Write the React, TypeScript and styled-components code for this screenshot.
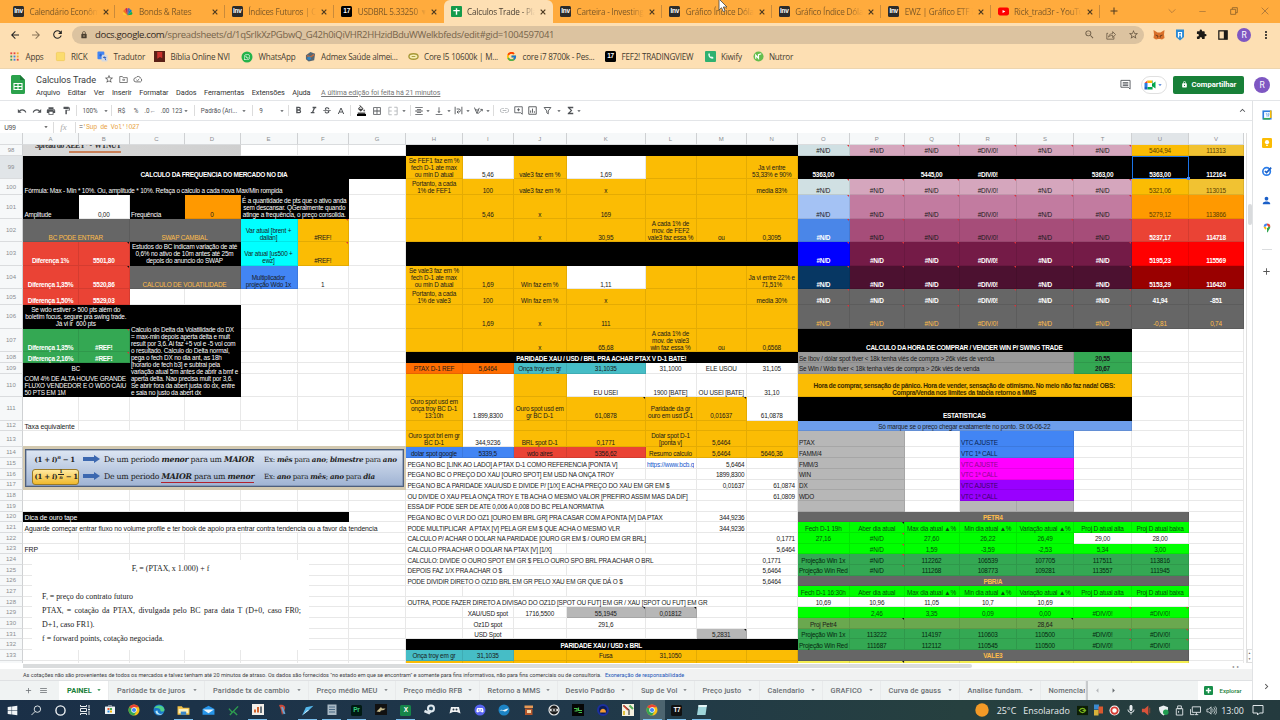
import React from 'react';
import styled, { createGlobalStyle, css } from 'styled-components';
import {
  MdUndo, MdRedo, MdPrint, MdFormatPaint, MdFormatBold, MdFormatItalic, MdStrikethroughS,
  MdFormatColorFill, MdBorderAll, MdFormatAlignCenter, MdVerticalAlignBottom,
  MdInsertLink, MdFunctions, MdArrowDropDown, MdKeyboardArrowUp, MdStarBorder, MdLock, MdArrowBack,
  MdArrowForward, MdRefresh, MdAdd, MdExtension, MdMoreVert, MdMic, MdZoomOut, MdKeyboardArrowRight,
  MdPerson, MdArrowLeft, MdArrowRight, MdMenu,
} from 'react-icons/md';
import { FcGoogle } from 'react-icons/fc';
import { FaWindows, FaWhatsapp } from 'react-icons/fa';

const Global = createGlobalStyle`
  * { box-sizing: border-box; }
  body { margin: 0; width: 1280px; height: 720px; overflow: hidden; background: #fff; }
`;

const ui = `"Open Sans", "Noto Sans", sans-serif`;
const roboto = `Roboto, "Liberation Sans", sans-serif`;
const arial = `"Liberation Sans", Arial, sans-serif`;

const Page = styled.div`
  width: 1280px; height: 720px; display: flex; flex-direction: column; overflow: hidden;
  font-family: ${roboto}; color: #444;
`;

/* ---------- browser ---------- */
const TabStrip = styled.div`
  height: 22.5px; flex: none; display: flex; padding-left: 6px; background: #ffab3d;
`;
const BrowserTab = styled.div<{ $active?: boolean }>`
  width: 109.4px; height: 23px; flex: none; display: flex; align-items: center; padding: 0 0 0 7px;
  font: 8.2px ${ui}; letter-spacing: -0.22px; color: ${p => (p.$active ? '#4c4236' : '#7f5a28')};
  ${p => p.$active && css`background: #fddfb3; border-radius: 6px 6px 0 0;`}
`;
const TabLabel = styled.span`
  width: 68px; margin-left: 5.5px; overflow: hidden; white-space: nowrap;
  mask-image: linear-gradient(90deg, #000 80%, transparent);
`;
const TabClose = styled.svg`margin-left: 5px; width: 6px; height: 6px; flex: none;`;
const TabRule = styled.i`width: 1px; height: 13px; margin-left: auto; background: #c98a3a;`;
const NewTab = styled.div`
  width: 28px; display: flex; align-items: center; justify-content: center; font-size: 12px; color: #4d3a20;
`;
const WindowButtons = styled.div`
  margin-left: auto; display: flex; align-items: center;
`;
const WinSlot = styled.span`
  width: 31px; height: 20px; display: flex; align-items: center; justify-content: center;
`;

const Badge = styled.span<{ $bg: string; $fg?: string; $s?: number }>`
  width: ${p => p.$s ?? 11}px; height: ${p => p.$s ?? 11}px; flex: none; border-radius: 1.5px;
  display: flex; align-items: center; justify-content: center;
  background: ${p => p.$bg}; color: ${p => p.$fg ?? '#fff'}; font: bold 6.5px/1 ${arial}; letter-spacing: -0.3px;
`;

const AddressRow = styled.div`
  height: 24px; flex: none; display: flex; align-items: center; background: #fddfb3; color: #222;
`;
const Slot = styled.span<{ $w: number }>`
  width: ${p => p.$w}px; flex: none; display: flex; align-items: center; justify-content: center; white-space: nowrap;
`;
const UrlBar = styled.div`
  width: 1072px; height: 18px; border-radius: 9px; background: #dcc3a0; display: flex; align-items: center;
  padding-left: 8px; font: 9.5px ${ui}; letter-spacing: -0.32px; color: #77644a; white-space: nowrap;
  b { font-weight: 400; color: #33291d; }
`;
const UrlText = styled.span`margin-left: 7px; flex: 1; line-height: 17px; height: 18px;`;
const Bookmarks = styled.div`
  height: 22.5px; flex: none; display: flex; align-items: center; background: #fddfb3; border-bottom: 1px solid #ecd5b0;
  padding: 0 0 1.5px 9px; font: 8.1px ${ui}; letter-spacing: -0.22px; color: #463d30;
`;
const Bookmark = styled.div<{ $w: number }>`
  width: ${p => p.$w}px; flex: none; display: flex; align-items: center; gap: 5.5px; white-space: nowrap;
  svg { flex: none; }
`;
const Avatar = styled.span<{ $s: number }>`
  width: ${p => p.$s}px; height: ${p => p.$s}px; border-radius: 50%; background: #7e57c2; color: #fff;
  display: flex; align-items: center; justify-content: center; font: 8.5px ${roboto};
`;

/* ---------- docs header ---------- */
const DocsHeader = styled.div`
  height: 32px; flex: none; display: flex; background: #fff; border-bottom: 1px solid #e3e5e8; padding-left: 11px;
`;
const DocsMain = styled.div`flex: 1; padding: 3.5px 0 0 11px;`;
const TitleRow = styled.div`
  height: 13px; display: flex; align-items: center; gap: 5px; color: #555; font: 9.2px ${roboto}; white-space: nowrap;
  span { width: 63px; color: #3a3c40; letter-spacing: -0.04px; }
`;
const MenuRow = styled.div`
  height: 14px; display: flex; align-items: center; gap: 7.6px; font: 7.3px ${roboto}; letter-spacing: -0.08px; color: #333;
  white-space: nowrap;
  u { margin-left: 3px; color: #777; font-size: 7.15px; letter-spacing: -0.08px; }
`;
const HeaderRight = styled.div`display: flex; align-items: center;`;
const MeetButton = styled.span`
  width: 26px; height: 18px; border: 1px solid #e0e0e0; border-radius: 9px; margin: 0 6px 0 10px;
  display: flex; align-items: center; justify-content: center; color: #3b73d1;
`;
const ShareButton = styled.button`
  width: 71px; height: 18px; border: 0; border-radius: 2px; background: #188038; color: #fff; padding: 0;
  display: flex; align-items: center; justify-content: center; gap: 4px; font: 700 7.6px ${roboto};
`;

const Body = styled.div`flex: 1; min-height: 0; display: flex;`;
const Left = styled.div`width: 1252px; flex: none; display: flex; flex-direction: column;`;
const ToolBar = styled.div`
  height: 20px; flex: none; display: flex; align-items: center; padding: 0 4px 0 14px; border-bottom: 1px solid #e3e5e8;
  color: #505357; font: 6.3px ${roboto};
`;
const Rule = styled.i<{ $w: number }>`
  width: ${p => p.$w}px; height: 11px; flex: none;
  background: linear-gradient(#dcdcdc, #dcdcdc) center / 1px 100% no-repeat;
`;
const Push = styled.span`flex: 1;`;
const FillIcon = styled.span`display: flex; border-bottom: 2px solid #000; height: 11px; align-items: flex-start; color: #444;`;
const FormulaBar = styled.div`
  height: 12px; flex: none; display: flex; align-items: center; font: 6.4px ${arial}; color: #444; padding-left: 4px;
  em { font-family: "Liberation Serif", serif; font-size: 9px; color: #aaa; }
  code { font: 6.6px "Liberation Mono", monospace; letter-spacing: -0.42px; color: #e8a33c; white-space: pre; }
  code b { font-weight: 400; color: #555; }
`;

/* ---------- sheet ---------- */
const colW = [23, 56, 50.5, 55, 56, 57, 51.5, 57, 57, 50.5, 53.5, 78.5, 51, 50.5, 50.5, 52.5, 54.5, 55, 57.5, 57, 58, 57, 55];
const rowH = [12, 10.5, 23.5, 16.3, 23.5, 23.4, 23.4, 23.4, 16.2, 23.6, 23.6, 10.6, 10.6, 23.4, 23.6, 10.6, 16.3, 10.9,
  ...Array(19).fill(10.67), 10.67];

const SheetRow = styled.div`height: 530px; flex: none; display: flex;`;
const Sheet = styled.div`
  width: 1246px; height: 530px; overflow: hidden; display: grid;
  grid-template-columns: ${colW.map(w => w + 'px').join(' ')};
  grid-template-rows: ${rowH.map(h => h + 'px').join(' ')};
  font: 6.4px/7px ${arial}; color: #1a1a1a;
`;
type Align = 'center' | 'flex-start' | 'flex-end';
type CellProps = { $bg?: string; $fg?: string; $bold?: boolean; $align: Align; $note?: string; $wide?: boolean };
const Cell = styled.div<CellProps>`
  min-width: 0; min-height: 0; display: flex; align-items: flex-end; justify-content: ${p => p.$align};
  text-align: ${p => (p.$align === 'center' ? 'center' : 'left')};
  padding: 0 ${p => (p.$align === 'center' ? 0 : 1.5)}px 0.3px; white-space: pre; position: relative;
  font-size: ${p => (p.$wide ? 6.9 : p.$bold ? 6.5 : 6.4)}px;
  letter-spacing: ${p => (p.$wide ? -0.1 : p.$bold ? -0.3 : -0.18)}px;
  background: ${p => p.$bg ?? '#fff'}; color: ${p => p.$fg ?? '#1a1a1a'}; font-weight: ${p => (p.$bold ? 700 : 400)};
  border-right: 1px solid rgba(0, 0, 0, 0.09); border-bottom: 1px solid rgba(0, 0, 0, 0.09);
  ${p => p.$note && css`
    &::after {
      content: ''; position: absolute; top: 0; right: 0; border: 1.5px solid;
      border-color: ${p.$note} ${p.$note} transparent transparent;
    }
  `}
`;
const Head = styled.div<{ $on?: boolean }>`
  background: ${p => (p.$on ? '#e1e5e8' : '#f6f8f9')}; color: #8a8d90; font: 6px/10px ${arial};
  display: flex; align-items: center; justify-content: center;
  border-right: 1px solid #cfd1d3; border-bottom: 1px solid #dadcde;
`;
const Selected = styled.div`
  position: relative; border: 1px solid #1a73e8;
  &::after { content: ''; position: absolute; right: -2px; bottom: -2px; width: 3px; height: 3px; background: #4b8df0; }
`;
const Link = styled.span`color: #1155cc; text-decoration: underline; overflow: hidden;`;

const Y = '#fbbc04', K = '#000', G6 = '#666', W = '#fff', RED = '#ea4335', GR = '#34a853', LIME = '#00ff00',
  BLUE = '#4285f4', TEAL = '#46bdc6', GREY = '#b7b7b7', GOLD = '#ffbd4a', RN = '#e0303a', CY = '#00ffff';

type Item = { at: string; t?: string; bg?: string; fg?: string; f?: string };
const items: Item[] = [];
const put = (at: string, t = '', bg?: string, fg?: string, f = '') => { items.push({ at, t, bg, fg, f }); };
const rowOf = (cols: string, row: number, vals: string[], bg?: string, fg?: string, f = '') =>
  cols.split('').forEach((c, i) => put(`${c}${row}`, vals[i] ?? '', bg, fg, f));

// A–G
put('A99:G99', 'CALCULO DA FREQUENCIA DO MERCADO NO DIA', K, W, 'b');
put('A100:F100', 'Fórmula: Max - Min * 10%. Ou, amplitude * 10%. Refaça o calculo a cada nova Max/Min rompida', K, W, 'l');
put('A101', 'Amplitude', K, W, 'l'); put('B101', '0,00');
put('C101', 'Frequência', K, W, 'l'); put('D101', '0', '#ff9900');
put('E101:F101', 'É a quantidade de pts que o ativo anda\nsem descansar. QGeralmente quando\natinge a frequência, o preço consolida.', K, W);
put('A102:B102', 'BC PODE ENTRAR', G6, GOLD); put('C102:D102', 'SWAP CAMBIAL', G6, GOLD);
put('E102', 'Var atual [brent +\ndalian]', CY); put('F102', '#REF!', Y, undefined, 'n');
put('A103', 'Diferença 1%', RED, W, 'b'); put('B103', '5501,80', RED, W, 'bk');
put('C103:D103', 'Estudos do BC indicam variação de até\n0,6% no ativo de 10m antes até 25m\ndepois do anuncio do SWAP', K, W);
put('E103', 'Var atual [us500 +\newz]', CY); put('F103', '#REF!', Y, undefined, 'n');
put('A104', 'Diferença 1,35%', RED, W, 'b'); put('B104', '5520,86', RED, W, 'bk');
put('C104:D104', 'CALCULO DE VOLATILIDADE', G6, GOLD);
put('E104', 'Multiplicador\nprojeção Wdo 1x', BLUE); put('F104', '1');
put('A105', 'Diferença 1,50%', RED, W, 'b'); put('B105', '5529,03', RED, W, 'b');
put('A106:B106', 'Se wdo estiver > 500 pts além do\nboletim focus, segure pra swing trade.\nJá vi ir  600 pts', K, W);
put('C106:D110', 'Calculo do Delta da Volatilidade do DX\n= max-min depois aperta delta e mult\nresult por 3,6. Ai faz +5 vol e -5 vol com\no resultado. Calculo do Delta normal,\npega o fech DX no dia ant, as 18h\n[horario de fech b3] e subtrai pela\nvariação atual 5m antes de abrir a bmf e\naperta delta. Nao precisa mult por 3,6.\nSe abrir fora da abert justa do dx, entre\ne saia no justo da abert dx', K, W, 'l');
put('A107', 'Diferença 1,35%', GR, W, 'b'); put('B107', '#REF!', GR, W, 'bn');
put('A108', 'Diferença 2,16%', GR, W, 'b'); put('B108', '#REF!', GR, W, 'bn');
put('A109:B109', 'BC', K, W);
put('A110:B110', 'COM 4% DE ALTA HOUVE GRANDE\nFLUXO VENDEDOR E O WDO CAIU\n50 PTS EM 1M', K, W, 'l');
put('A112', 'Taxa equivalente', undefined, undefined, 'lw');
put('A113:G113');
put('A120:F120', 'Dica de ouro tape', K, W, 'lw');
put('A121:G121', 'Aguarde começar entrar fluxo no volume profile e ter book de apoio pra entrar contra tendencia ou a favor da tendencia', undefined, undefined, 'lw');
put('A123', 'FRP', undefined, undefined, 'lw');

// H–N
put('H98:N98', '', K);
rowOf('HIJKLMN', 99, ['Se FEF1 faz em %\nfech D-1 ate max\nou min D atual', '', 'vale3 faz em %', '', '', '', 'Ja vi entre\n53,33% e 90%'], Y);
put('I99', '5,46'); put('K99', '1,69');
rowOf('HIJKLMN', 100, ['Portanto, a cada\n1% de FEF1', '100', 'vale3 faz em %', 'x', '', '', 'media 83%'], Y);
rowOf('HIJKLMN', 101, ['', '5,46', 'x', '169'], Y);
rowOf('HIJKLMN', 102, ['', '', 'x', '30,95', 'A cada 1% de\nmov. de FEF2\nvale3 faz essa %', 'ou', '0,3095'], Y);
put('H103:N103', '', K);
rowOf('HIJKLMN', 104, ['Se vale3 faz em %\nfech D-1 ate max\nou min D atual', '1,69', 'Win faz em %', '', '', '', 'Ja vi entre 22% e\n71,51%'], Y);
put('K104', '1,11');
rowOf('HIJKLMN', 105, ['Portanto, a cada\n1% de vale3', '100', 'Win faz em %', 'x', '', '', 'media 30%'], Y);
rowOf('HIJKLMN', 106, ['', '1,69', 'x', '111'], Y);
rowOf('HIJKLMN', 107, ['', '', 'x', '65,68', 'A cada 1% de\nmov. de vale3\nwin faz essa %', 'ou', '0,6568'], Y);
put('H108:N108', 'PARIDADE XAU / USD / BRL PRA ACHAR PTAX V D-1 BATE!', K, W, 'b');
rowOf('HI', 109, ['PTAX D-1 REF', '5,6464'], '#ff6d01');
rowOf('JK', 109, ['Onça troy em gr', '31,1035'], TEAL);
rowOf('LMN', 109, ['31,1000', 'ELE USOU', '31,105']);
put('H110', '', Y); put('J110', '', Y);
put('K110', 'EU USEI'); put('L110', '1900 [BATE]'); put('M110', 'OU USEI [BATE]'); put('N110', '31,10');
put('H111', 'Ouro spot usd em\nonça troy BC D-1\n13:10h', Y); put('I111', '1.899,8300');
put('J111', 'Ouro spot usd em\ngr BC D-1', Y); put('K111', '61,0878', Y, undefined, 'k');
put('L111', 'Paridade da gr\nouro em usd D-1', Y); put('M111', '0,01637', Y, undefined, 'k'); put('N111', '61,0878');
rowOf('HJKLMN', 112, [], Y);
rowOf('HJKLMN', 113, ['Ouro spot brl em gr\nBC D-1', 'BRL spot D-1', '0,1771', 'Dolar spot D-1\n[ponta v]', '5,6464', ''], Y);
put('I113', '344,9236');
rowOf('HI', 114, ['dolar spot google', '5339,5'], BLUE);
rowOf('JK', 114, ['wdo aires', '5356,62'], RED);
rowOf('LMN', 114, ['Resumo calculo', '5,6464', '5646,36'], Y);
const steps: [number, string, string][] = [
  [115, 'K', 'PEGA NO BC [LINK AO LADO] A PTAX D-1 COMO REFERENCIA [PONTA V]'],
  [116, 'K', 'PEGA NO BC O PREÇO DO XAU [OURO SPOT] EM USD NA ONÇA TROY'],
  [117, 'L', 'PEGA NO BC A PARIDADE XAU/USD E DIVIDE P/ [1/X] E ACHA PREÇO DO XAU EM GR EM $'],
  [118, 'L', 'OU DIVIDE O XAU PELA ONÇA TROY E TB ACHA O MESMO VALOR [PREFIRO ASSIM MAS DA DIF]'],
  [119, 'K', 'ESSA DIF PODE SER DE ATE 0,006 A 0,008 DO BC PELA NORMATIVA'],
  [120, 'L', 'PEGA NO BC O VLR DO OZ1 [OURO EM BRL GR] PRA CASAR COM A PONTA [V] DA PTAX'],
  [121, 'K', 'PODE MULTIPLICAR  A PTAX [V] PELA GR EM $ QUE ACHA O MESMO VLR'],
  [122, 'K', 'CALCULO P/ ACHAR O DOLAR NA PARIDADE [OURO GR EM $ / OURO EM GR BRL]'],
  [123, 'J', 'CALCULO PRA ACHAR O DOLAR NA PTAX [V] [1/X]'],
  [124, 'L', 'CALCULO: DIVIDE O OURO SPOT EM GR $ PELO OURO SPO BRL PRA ACHAR O BRL'],
  [125, 'I', 'DEPOIS FAZ 1/X PRA ACHAR O $'],
  [126, 'K', 'PODE DIVIDIR DIRETO O OZ1D BRL EM GR PELO XAU EM GR QUE DÁ O $'],
  [128, 'M', 'OUTRA, PODE FAZER DIRETO A DIVISAO DO OZ1D [SPOT OU FUT] EM GR / XAU [SPOT OU FUT] EM GR'],
];
steps.forEach(([r, end, t]) => put(`H${r}:${end}${r}`, t, undefined, undefined, 'l'));
put('L115', 'https://www.bcb.gov', undefined, undefined, 'u');
const right: [string, string][] = [
  ['M115', '5,6464'], ['M116', '1899,8300'], ['M117', '0,01637'], ['N117', '61,0874'], ['N118', '61,0809'],
  ['M120', '344,9236'], ['M121', '344,9236'], ['N122', '0,1771'], ['N123', '5,6464'],
];
right.forEach(([at, t]) => put(at, t, undefined, undefined, 'r'));
put('N124', '0,1771'); put('N125', '5,6464'); put('N126', '5,6464');
put('I129', 'XAU/USD spot'); put('J129', '1716,5500');
put('K129', '55,1945', GREY, undefined, 'k'); put('L129', '0,01812', GREY, undefined, 'k');
put('I130', 'Oz1D spot'); put('K130', '291,6'); put('I131', 'USD Spot'); put('M131', '5,2831', GREY, undefined, 'k');
put('H132:N132', 'PARIDADE XAU / USD x BRL', K, W, 'b');
rowOf('HI', 133, ['Onça troy em gr', '31,1035'], TEAL);
rowOf('JKLMN', 133, ['', 'Fusa', '31,1050', '', ''], Y);
rowOf('HIJKLMN', 134, [], Y);

// O–V
const heat: [number, string, string, string, string, string, string, string, string][] = [
  [98, '#d0e0e3', '#d5a6bd', Y, '#f1c232', '', '', '5404,94', '111313'],
  [100, '#d0e0e3', '#d5a6bd', Y, '#f1c232', '', '', '5321,06', '113015'],
  [101, '#a4c2f4', '#c27ba0', '#ff9900', '#ff9900', '', '', '5279,12', '113866'],
  [102, '#4a86e8', '#a64d79', RED, RED, W, '', '5237,17', '114718'],
  [103, '#0000ff', '#741b47', '#ff0000', '#ff0000', W, W, '5195,23', '115569'],
  [104, '#073763', '#4c1130', '#990000', '#990000', W, W, '5153,29', '116420'],
  [105, G6, G6, G6, G6, W, W, '41,94', '-851'],
  [106, G6, G6, G6, G6, GOLD, GOLD, '-0,81', '0,74'],
];
heat.forEach(([r, o, p, u, v, fo, fp, tu, tv]) => {
  const strong = fo === W;
  put(`O${r}`, '#N/D', o, fo || undefined, strong ? 'bn' : 'n');
  rowOf('PQRST', r, ['#N/D', '#N/D', '#DIV/0!', '#N/D', '#N/D'], p, fp || undefined, fp === W ? 'bn' : 'n');
  put(`U${r}`, tu, u, fo || '#5a3c00', strong ? 'b' : ''); put(`V${r}`, tv, v, fo || '#5a3c00', strong ? 'b' : '');
});
rowOf('OPQRSTUV', 99, ['5363,00', '', '5445,00', '#DIV/0!', '', '5363,00', '5363,00', '112164'], K, W, 'b');
put('O107:T107', 'CALCULO DA HORA DE COMPRAR / VENDER WIN P/ SWING TRADE', K, W, 'b');
put('O108:S108', 'Se Ibov / dólar spot tiver < 18k tenha viés de compra > 26k viés de venda', '#999', undefined, 'l');
put('O109:S109', 'Se Win / Wdo tiver < 18k tenha viés de compra > 26k viés de venda', '#999', undefined, 'l');
put('T108', '20,55', GR, undefined, 'b'); put('T109', '20,67', GR, undefined, 'b');
put('O110:T110', 'Hora de comprar, sensação de pânico. Hora de vender, sensação de otimismo. No meio não faz nada! OBS:\nCompra/Venda nos limites da tabela retorno a MMS', Y, '#3a2a00', 'b');
put('O111:T111', 'ESTATISTICAS', K, W, 'b');
put('O112:T112', 'Só marque se o preço chegar exatamente no ponto. St 06-06-22', '#6d9eeb');
['PTAX', 'FAMM/4', 'FMM/3', 'WIN', 'DX', 'WDO', ''].forEach((t, i) => put(`O${113 + i}:P${113 + i}`, t, GREY, undefined, 'l'));
[[BLUE, '#0c2450'], ['#ff00ff', '#8c0a8c'], ['#9900ff', '#3c0468']].forEach(([bg, fg], i) => {
  put(`R${113 + i * 2}:S${113 + i * 2}`, 'VTC AJUSTE', bg, fg, 'l');
  put(`R${114 + i * 2}:S${114 + i * 2}`, 'VTC 1ª CALL', bg, fg, 'l');
});
put('R119', '', GREY); put('S119', '', GREY);
put('O120:U120', 'PETR4', G6, GOLD, 'b');
const heads = ['Aber dia atual', 'Max dia atual ▲%', 'Min dia atual ▲%', 'Variação atual ▲%', 'Proj D atual alta', 'Proj D atual baixa'];
const DG = '#06500d';
const DD = '#05270f';
rowOf('OPQRSTU', 121, ['Fech D-1 19h', ...heads], LIME, DG);
put('P121', heads[0], LIME, DG, 'k');
rowOf('OPQRS', 122, ['27,16', '#N/D', '27,60', '26,22', '26,49'], LIME, DG); put('P122', '#N/D', LIME, DG, 'n');
put('T122', '29,00'); put('U122', '28,00');
rowOf('OPQRSTU', 123, ['', '#N/D', '1,59', '-3,59', '-2,53', '5,34', '3,00'], LIME, DG); put('P123', '#N/D', LIME, DG, 'n');
rowOf('OPQRSTU', 124, ['Projeção Win 1x', '#N/D', '112262', '106539', '107705', '117511', '113816'], GR, DD); put('P124', '#N/D', GR, DD, 'n');
rowOf('OPQRSTU', 125, ['Projeção Win Red', '#N/D', '111268', '108773', '109281', '113557', '111945'], GR, DD); put('P125', '#N/D', GR, DD, 'n');
put('O126:U126', 'PBR/A', G6, GOLD, 'b');
rowOf('OPQRSTU', 127, ['Fech D-1 16:30h', ...heads], LIME, DG);
rowOf('OPQRSTU', 128, ['10,69', '10,96', '11,05', '10,7', '10,69']);
rowOf('OPQRS', 129, ['', '2,46', '3,35', '0,09', '0,00'], LIME, DG); rowOf('TU', 129, ['#DIV/0!', '#DIV/0!'], LIME, DG, 'n');
rowOf('OPQRSTU', 130, ['Proj Petr4'], '#6aa84f');
put('P130', '', '#6aa84f', undefined, 'k'); put('S130', '28,64', '#6aa84f', undefined, 'k');
rowOf('OPQRS', 131, ['Projeção Win 1x', '113222', '114197', '110603', '110500'], GR, DD); rowOf('TU', 131, ['#DIV/0!', '#DIV/0!'], GR, DD, 'n');
rowOf('OPQRS', 132, ['Projeção Win Red', '111687', '112112', '110545', '110500'], GR, DD); rowOf('TU', 132, ['#DIV/0!', '#DIV/0!'], GR, DD, 'n');
put('O133:U133', 'VALE3', G6, GOLD, 'b');
rowOf('OPQRSTU', 134, [], '#f4ee52'); put('P134', '', '#f4ee52', undefined, 'k');

const area = (ref: string) => {
  const [a, b = a] = ref.split(':');
  const c = (s: string) => s.charCodeAt(0) - 63;
  const r = (s: string) => Number(s.slice(1)) - 96;
  return `${r(a)} / ${c(a)} / ${r(b) + 1} / ${c(b) + 1}`;
};

/* pictures laid over the sheet */
const Scrap = styled.div`
  position: relative; background: linear-gradient(90deg, #d9d9d9, #cfcfcf); overflow: hidden; padding-left: 12px;
  font: bold 7.6px/2px "Liberation Serif", serif; letter-spacing: -0.45px; color: #333; white-space: pre;
  i { display: block; width: 52px; height: 2px; margin: 3.5px 0 0 34px; background: #c98058; }
`;
const Tax = styled.div`
  position: relative; background: #d3c9b0; margin-top: -1px; padding: 3px 2px 3px; color: #222; font-family: "DejaVu Serif", serif;
`;
const TaxInner = styled.div`
  height: 100%; border: 1px solid #4d5f7d; background: linear-gradient(#dde6f3, #9fb3d3); box-shadow: inset 0 0 0 0.5px #6d7f9d;
  display: flex; flex-direction: column; justify-content: space-around; padding: 0 0 1px 6px;
`;
const TaxRow = styled.div`
  display: flex; align-items: center; height: 16px; white-space: nowrap; font-size: 7.8px; letter-spacing: -0.25px;
  b { font-style: italic; }
`;
const Formula = styled.span<{ $gold?: boolean }>`
  width: 47px; height: 16px; display: flex; align-items: center; padding-left: 1.5px; margin-right: 4px;
  font-weight: 700; font-size: 7px; letter-spacing: -0.3px; border: 1px solid transparent; border-radius: 3px; white-space: pre;
  ${p => p.$gold && css`border-color: #9a7a26; background: linear-gradient(#ffe9a0, #f0b92c);`}
  sup { font-size: 5px; line-height: 1; font-style: italic; margin-bottom: 4px; }
  span { margin-left: 2px; }
`;
const Power = styled.em`
  display: flex; flex-direction: column; align-items: center; font-size: 4.8px; line-height: 5px; letter-spacing: 0; margin: 0 0 4px 1px;
  b:first-child { border-bottom: 0.5px solid #222; font-style: normal; padding: 0 1px; }
`;
const TaxText = styled.span<{ $w: number }>`width: ${p => p.$w}px; flex: none;`;
const TaxHint = styled.span`font-size: 7.15px;`;
const Marked = styled.span`border-bottom: 1px solid #b3202c; padding-bottom: 1px;`;
const Frp = styled.div`
  position: relative; width: 277px; height: 90px; margin: 6px 0 0 9px; background: #fff; padding: 0 8px 0 10px;
  font: 7.95px/13.8px "Liberation Serif", serif; color: #222;
  sub { font-size: 4.5px; line-height: 0; vertical-align: -1px; }
`;
const FrpTitle = styled.div`text-align: center; padding-right: 2px; margin-bottom: 13px; line-height: 17px;`;
const FrpLine = styled.div<{ $full?: boolean }>`white-space: nowrap; ${p => p.$full && css`text-align-last: justify;`}`;

const VScroll = styled.div`
  width: 6px; border-left: 1px solid #e0e0e0; display: flex; flex-direction: column; align-items: center; padding-top: 71px;
  i { width: 4px; height: 21px; border-radius: 2px; background: #d9dbdd; }
`;
const Steppers = styled.div`
  margin-top: auto; height: 14px; width: 6px; border: 1px solid #ddd; font: 3px/6px ${arial}; color: #666; text-align: center;
`;
const HScroll = styled.div`
  height: 6px; flex: none; padding: 1px 0 0 23px; background: #fff; display: flex; justify-content: space-between;
  i { width: 949px; height: 4px; background: #dadcdd; border-radius: 0 2px 2px 0; }
  span { width: 20px; font: 4px/5px ${arial}; color: #777; }
`;
const Legal = styled.div`
  height: 11px; flex: none; background: #f1f2f2; padding-left: 23px; font: 5.5px/12px ${roboto}; color: #3c4043; white-space: nowrap;
  a { color: #1a55b8; margin-left: 2px; }
`;
const SheetTabs = styled.div`
  flex: 1; display: flex; align-items: stretch; background: #f0f3f3; border-top: 1px solid #dfe1e3; color: #686d71;
  font: 500 7.4px ${roboto}; overflow: hidden;
`;
const SheetTab = styled.div<{ $w: number; $on?: boolean }>`
  width: ${p => p.$w}px; flex: none; display: flex; align-items: center; justify-content: space-between; padding: 0 5px 1px 8px;
  white-space: nowrap; border-right: 1px solid #e8eaeb; letter-spacing: 0.13px; overflow: hidden;
  ${p => p.$on && css`background: #fff; color: #188038; font-weight: 700; letter-spacing: 0;`}
`;
const TabNav = styled.div`
  width: 112px; flex: none; display: flex; align-items: center; padding-left: 4px; gap: 5px; background: #f0f3f3;
  border-left: 2px solid #c7cacc;
`;
const Explore = styled.div`
  flex: 1; display: flex; align-items: center; gap: 7px; padding-left: 6px; background: #fff; color: #188038; font: 500 6px ${roboto};
`;
const SidePanel = styled.div`
  flex: 1; border-left: 1px solid #e0e2e4; display: flex; flex-direction: column; align-items: center; padding-top: 9px; background: #fff;
`;
const SideSlot = styled.span<{ $h: number }>`
  height: ${p => p.$h}px; flex: none; display: flex; align-items: flex-start; justify-content: center;
`;

/* ---------- task bar ---------- */
const TaskBar = styled.div`
  height: 20px; flex: none; display: flex; align-items: center; background: linear-gradient(90deg, #1a2f47, #20384a 45%, #26403f 75%, #243a3e);
  color: #e8edf0; font: 8.9px ${ui};
`;
const Task = styled.span<{ $open?: boolean; $on?: boolean }>`
  width: 24.67px; height: 20px; flex: none; display: flex; align-items: center; justify-content: center;
  ${p => p.$on && css`background-color: #4d6570;`}
  ${p => p.$open && css`
    background-image: linear-gradient(#7cc0ee, #7cc0ee); background-repeat: no-repeat;
    background-size: 19px 1.5px; background-position: center bottom;
  `}
`;

const Caret = styled(MdArrowDropDown).attrs({ size: 8 })`flex: none;`;
const Svg = ({ s = 11, children }: { s?: number; children: React.ReactNode }) => (
  <svg width={s} height={s} viewBox="0 0 24 24" fill="none">{children}</svg>
);
const Chrome = () => (
  <Svg s={12}>
    <circle cx="12" cy="12" r="11" fill="#fbc116" />
    <path d="M12 12 2.5 6.5A11 11 0 0 1 21.5 6.5H12Z" fill="#ea4335" />
    <path d="M12 12 2.5 6.5A11 11 0 0 0 12 23l5-8Z" fill="#34a853" />
    <circle cx="12" cy="12" r="5.4" fill="#fff" /><circle cx="12" cy="12" r="4.2" fill="#4285f4" />
  </Svg>
);
const Peacock = () => (
  <Svg>
    <path d="M12 20 3 19q-3-4 1-6Z" fill="#fccb2f" /><path d="M12 20 3 12q0-5 4-4Z" fill="#f37021" />
    <path d="M12 20 7 7q3-5 5-1Z" fill="#cc2350" /><path d="m12 20 0-14q4-4 5 1Z" fill="#6460aa" />
    <path d="m12 20 5-12q5-1 4 4Z" fill="#0089cf" /><path d="m12 20 8-7q5 2 1 6Z" fill="#0db14b" />
  </Svg>
);
const SheetsSmall = () => (
  <Svg><rect width="24" height="24" rx="2" fill="#149a4c" /><path d="M12 5v14M5 10h14" stroke="#fff" strokeWidth="3" /></Svg>
);
const YouTube = () => (<Svg><rect x="0" y="3.5" width="24" height="17" rx="4" fill="#f00" /><path d="m10 8.5 6 3.5-6 3.5Z" fill="#fff" /></Svg>);
const Inv = () => <Badge $bg="#2b2b2b">Inv</Badge>;
const TV = () => <Badge $bg="#000">17</Badge>;
const BlueArrow = () => (
  <TaxText $w={21}><svg width="17" height="8" viewBox="0 0 17 8"><path d="M0 2h11V0l6 4-6 4V6H0Z" fill="#3c68b0" /></svg></TaxText>
);

const browserTabs: [React.ReactNode, string][] = [
  [<Inv />, 'Calendário Econôm'], [<Peacock />, 'Bonds & Rates'], [<Inv />, 'Índices Futuros | C'], [<TV />, 'USDBRL 5.33250 ▼'],
  [<SheetsSmall />, 'Calculos Trade - Pla'], [<Inv />, 'Carteira - Investing'], [<Inv />, 'Gráfico Índice Dóla'], [<Inv />, 'Gráfico Índice Dóla'],
  [<Inv />, 'EWZ | Gráfico ETF i'], [<YouTube />, 'Rick_trad3r - YouTu'],
];

const appGrid = ['#e5443c', '#e5443c', '#f0a72c', '#3f9b57', '#3f7de0', '#f0a72c', '#3f9b57', '#3f7de0', '#e5443c'];
const bookmarks: [number, React.ReactNode, string][] = [
  [45.5, <Svg>{appGrid.map((c, i) => <rect key={i} x={3 + (i % 3) * 7} y={3 + Math.floor(i / 3) * 7} width="4" height="4" fill={c} />)}</Svg>, 'Apps'],
  [42.5, <Svg><rect x="3" y="3" width="18" height="18" rx="2" fill="#fbdc6e" stroke="#eabf3f" /></Svg>, 'RICK'],
  [57, <Svg><rect x="1" y="1" width="15" height="17" rx="2" fill="#4285f4" /><rect x="10" y="8" width="13" height="15" rx="2" fill="#d5d9e0" /><path d="M5 9h6M8 6v6M13 14h7M16 12l3 8" stroke="#2c5fc0" strokeWidth="2" /></Svg>, 'Tradutor'],
  [87, <Svg><rect width="24" height="24" fill="#5b2016" /><path d="M7 2h11v14l-5-3-6 4Z" fill="#c9302c" /></Svg>, 'Bíblia Online NVI'],
  [63.5, <Svg s={12}><circle cx="12" cy="12" r="11" fill="#25b34b" /><g transform="translate(5 5)"><FaWhatsapp size={14} color="#fff" /></g></Svg>, 'WhatsApp'],
  [103, <Svg><path d="m2 9 10-7 10 4-2 14-12 3-6-5Z" fill="#546674" /><path d="m4 10 8 3 8-5" stroke="#c56a3a" strokeWidth="3" /><circle cx="9" cy="16" r="4" fill="#2f86c6" /></Svg>, 'Admex Saúde almei...'],
  [98.5, <Svg><ellipse cx="12" cy="12" rx="10" ry="6" fill="#f7eeb5" stroke="#a79837" strokeWidth="3" /><path d="M8 12h8" stroke="#a79837" strokeWidth="2" /></Svg>, 'Core I5 10600k | M...'],
  [99, <FcGoogle size={11} />, 'core i7 8700k - Pes...'],
  [99.5, <TV />, 'FEF2! TRADINGVIEW'],
  [48, <Svg><rect width="24" height="24" rx="2" fill="#2fb170" /><path d="M7 6c0 7 4 11 11 11v-4l-4-1-1 1-3-3 1-1-1-4Z" fill="#e9fff4" /></Svg>, 'Kiwify'],
  [50, <Svg><circle cx="12" cy="12" r="11" fill="#64bd4d" /><path d="M6 17V9l6 7V8l6-2" stroke="#fff" strokeWidth="2.6" /></Svg>, 'Nutror'],
];

const sheetTabs: [string, number][] = [
  ['Paridade tx de juros', 96], ['Paridade tx de cambio', 103.5], ['Preço médio MEU', 87], ['Preço médio RFB', 84], ['Retorno a MMS', 78],
  ['Desvio Padrão', 75.5], ['Sup de Vol', 61.5], ['Preço justo', 65], ['Calendario', 63], ['GRAFICO', 58], ['Curva de gauss', 79], ['Analise fundam.', 81], ['Nomenclar', 45],
];

const tasks: [React.ReactNode, string?][] = [
  [<Svg s={12}><rect x="2" y="5" width="20" height="15" rx="1" fill="#f0f4f6" /><rect x="7" y="8" width="4" height="4" fill="#e4572e" /><rect x="12" y="8" width="4" height="4" fill="#4caf50" /><rect x="7" y="13" width="4" height="4" fill="#2b8de0" /><rect x="12" y="13" width="4" height="4" fill="#f5b400" /><path d="M9 5V3h6v2" stroke="#f0f4f6" /></Svg>],
  [<Chrome />],
  [<Svg s={12}><circle cx="12" cy="12" r="11" fill="#1a78c9" /><path d="M2 9c4-9 19-8 21 2 0 5-6 5-8 3 1-5-6-7-13-5Z" fill="#4fd08a" /><path d="M9 13c0 6 5 8 11 6-5 5-15 3-15-5Z" fill="#b7e6f7" /></Svg>],
  [<Svg s={13}><path d="M1 4h8l2 3h12v13H1Z" fill="#f2c045" /><rect x="3" y="9" width="18" height="8" fill="#fdf0bb" /><rect x="7" y="14" width="10" height="6" fill="#3a86c9" /></Svg>, 'open'],
  [<Svg s={13}><path d="M1 9 12 3l11 6v11H1Z" fill="#2795e9" /><path d="m2 10 10 7 10-7Z" fill="#e9f6ff" /></Svg>],
  [<Svg s={11}><path d="M2 8 10 17M22 3 4 22M12 14l8 8" stroke="#2e9e4f" strokeWidth="3" /></Svg>],
  [<Svg s={12}><rect width="24" height="22" fill="#f4efe9" /><path d="M6 17V11M12 17V6" stroke="#d2622b" strokeWidth="4" /><path d="M18 18V5" stroke="#3d4c5a" strokeWidth="3" /></Svg>, 'open'],
  [<Svg s={12}><path d="M6 2c8-2 14 2 12 8l-6 12-2-10Z" fill="#c94b3c" /><path d="m12 6 5 14" stroke="#6aa5d0" strokeWidth="4" /></Svg>],
  [<Svg s={13}><path d="M2 21 9 6l14-3-8 8Z" fill="#55b8ec" /><path d="m2 21 9-9 4-1Z" fill="#e6f6ff" /></Svg>, 'open'],
  [<Svg s={12}><rect x="3" y="1" width="18" height="21" fill="#a9b9c5" /><path d="M6 6h12M6 11h12M6 16h12" stroke="#4b6a85" strokeWidth="2.4" /></Svg>, 'open'],
  [<Badge $bg="#001a12" $fg="#35d07e">Pr</Badge>, 'open'],
  [<Svg s={12}><rect width="24" height="22" fill="#111" /><path d="m3 15 9-9 2 3 7 0-3 3-6 1-2 3Z" fill="#c9bd8e" /></Svg>],
  [<Badge $bg="#16864a">X</Badge>, 'open'],
  [<Svg s={12}><circle cx="14" cy="9" r="8" fill="#dfe8ee" /><circle cx="14" cy="9" r="4" fill="#23455c" /><path d="m1 14 9 4 4-5" stroke="#dfe8ee" strokeWidth="5" /></Svg>],
  [<Svg s={12}><path d="M1 19 4 6h16l3 13-7-3H8Z" fill="#f0f2f3" /><circle cx="9" cy="11" r="2" fill="#2b3b47" /><circle cx="15" cy="11" r="2" fill="#2b3b47" /></Svg>],
  [<Svg s={12}><circle cx="12" cy="12" r="11" fill="#5865f2" /><path d="M5 16c0-10 2-8 7-8s7-2 7 8l-3 1-2-2h-4l-2 2Z" fill="#fff" /><circle cx="9.5" cy="12" r="1.5" fill="#5865f2" /><circle cx="14.5" cy="12" r="1.5" fill="#5865f2" /></Svg>],
  [<Svg s={12}><circle cx="12" cy="12" r="11" fill="#1c84c6" /><path d="M3 14c5-2 8 0 10 1 4 0 6-4 8-6-5 0-8 3-10 3s-5-2-8 2Z" fill="#e6f4fb" /></Svg>],
  [<Svg s={12}><rect x="4" y="9" width="15" height="13" fill="#b4562c" /><path d="M3 3h17v5H3Z" fill="#e79a56" /><path d="M8 12h8v6H8Z" fill="#f6d7a8" /></Svg>],
  [<Svg s={12}><circle cx="12" cy="12" r="10" fill="#1b1b1b" stroke="#e8e8e8" strokeWidth="2.4" /><path d="M4 12h16" stroke="#e8e8e8" strokeWidth="5" /><circle cx="9" cy="12" r="2" fill="#222" /><circle cx="15" cy="12" r="2" fill="#222" /></Svg>],
  [<Svg s={12}><rect width="24" height="24" fill="#050505" /><path d="M4 9h6v5H5M13 7v6h7M13 17h7" stroke="#46c14b" strokeWidth="2.4" /></Svg>],
  [<Svg s={12}><circle cx="12" cy="12" r="10" stroke="#1b2f9e" strokeWidth="4" fill="#0c1c55" /><path d="M6 17c0-10 12-10 12 0Z" fill="#f29a34" /></Svg>],
  [<Svg s={12}><rect width="24" height="24" fill="#f6f1df" /><path d="m3 3 11 9v10" stroke="#3c3c3c" strokeWidth="2.4" /><path d="m3 3 9 9" stroke="#d0402d" strokeWidth="3" /><path d="m15 3 7 7" stroke="#58b35c" strokeWidth="4" /><path d="M4 14v8" stroke="#e0c13e" strokeWidth="4" /></Svg>],
  [<Chrome />, 'on'],
  [<Badge $bg="#111">T7</Badge>, 'open'],
  [<Svg s={12}><path d="M5 2h17l-3 20H2Z" fill="#9fd5da" /><path d="M5 2h17l-1 4H5Z" fill="#e6f5f6" /></Svg>, 'open'],
];

const Tray = styled.div`margin-left: auto; display: flex; align-items: center; height: 20px;`;
const Pointer = styled.svg`position: absolute; left: 718px; top: -1px;`;

export default function App() {
  return (
    <Page>
      <Global />
      <TabStrip>
        {browserTabs.map(([icon, label], i) => (
          <BrowserTab key={i} $active={i === 4}>
            {icon}<TabLabel>{label}</TabLabel>
            <TabClose viewBox="0 0 6 6"><path d="M.7.7 5.3 5.3M5.3.7.7 5.3" stroke="#4d3a20" strokeWidth="1.2" /></TabClose>
            {i !== 3 && i !== 4 && <TabRule />}
          </BrowserTab>
        ))}
        <NewTab><MdAdd /></NewTab>
        <WindowButtons>
          <WinSlot><Svg s={8}><path d="m2 7 10 10L22 7" stroke="#a87438" strokeWidth="2.4" /></Svg></WinSlot>
          <WinSlot><Svg s={7}><path d="M1 12h22" stroke="#a87438" strokeWidth="2.6" /></Svg></WinSlot>
          <WinSlot><Svg s={8}><path d="M2 7h15v15H2ZM7 7V2h15v15h-5" stroke="#8a5f2a" strokeWidth="2.4" /></Svg></WinSlot>
          <WinSlot><Svg s={8}><path d="m2 2 20 20M22 2 2 22" stroke="#a0703a" strokeWidth="2.4" /></Svg></WinSlot>
        </WindowButtons>
      </TabStrip>
      <AddressRow>
        <Slot $w={30}><MdArrowBack size={12} /></Slot><Slot $w={12}><MdArrowForward size={12} color="#8a7558" /></Slot>
        <Slot $w={30}><MdRefresh size={13} /></Slot>
        <UrlBar>
          <MdLock size={8} color="#4a3f30" />
          <UrlText><b>docs.google.com</b>/spreadsheets/d/1qSrIkXzPGbwQ_G42h0iQiVHR2HHzidBduWWelkbfeds/edit#gid=1004597041</UrlText>
          <Slot $w={21}><MdZoomOut size={11} color="#6b5a44" /></Slot>
          <Slot $w={22}><Svg s={10}><path d="M5 8H2v14h17v-6M6 17c1-7 6-8 10-8V4l7 7-7 7v-5c-4 0-7 1-10 4Z" stroke="#6b5a44" strokeWidth="2" /></Svg></Slot>
          <Slot $w={22}><MdStarBorder size={11} color="#6b5a44" /></Slot>
        </UrlBar>
        <Slot $w={29}><Svg s={12}><path d="m1 2 8 5h6l8-5-1 9 1 7-5 3-4-1h-4l-4 1-5-3 1-7Z" fill="#d9702b" /><path d="m5 12 5 2-1 3M19 12l-5 2 1 3" stroke="#5b3218" strokeWidth="1.6" /></Svg></Slot>
        <Slot $w={14}><Svg s={12}><path d="M4 1h16v15l-8 7-8-7Z" fill="#2b8bd6" /><path d="M9 17V7h6v10M9 12h6" stroke="#fff" strokeWidth="2.4" /></Svg></Slot>
        <Slot $w={28}><MdExtension size={11} color="#1c1a17" /></Slot>
        <Slot $w={15}><Svg s={10}><rect x="2" y="2" width="20" height="20" stroke="#1c1a17" strokeWidth="3" /><rect x="14" y="2" width="8" height="20" fill="#1c1a17" /></Svg></Slot>
        <Slot $w={28}><Avatar $s={14}>R</Avatar></Slot>
        <Slot $w={15}><MdMoreVert size={12} /></Slot>
      </AddressRow>
      <Bookmarks>
        {bookmarks.map(([w, icon, label]) => <Bookmark key={label} $w={w}>{icon}{label}</Bookmark>)}
      </Bookmarks>
      <DocsHeader>
        <Slot $w={14}>
          <svg width="14" height="19" viewBox="0 0 14 19">
            <path d="M1.5 0H9l5 5v12.5a1.5 1.5 0 0 1-1.5 1.5h-11A1.5 1.5 0 0 1 0 17.5v-16A1.5 1.5 0 0 1 1.5 0Z" fill="#2ba24c" />
            <path d="M9 0v5h5Z" fill="#1b7a37" /><path d="M3 8.5h8v6H3ZM3 11.5h8M7 8.5v6" stroke="#fff" fill="none" strokeWidth="1.1" />
          </svg>
        </Slot>
        <DocsMain>
          <TitleRow>
            <span>Calculos Trade</span><MdStarBorder size={10} />
            <Svg s={9}><path d="M2 4h7l2 3h11v13H2ZM8 13h7M12 10l3 3-3 3" stroke="#666" strokeWidth="2.2" /></Svg>
            <Svg s={10}><path d="M7 19a5 5 0 0 1 0-10 6 6 0 0 1 11 1 5 5 0 0 1 0 9ZM8 14l3 2 4-4" stroke="#666" strokeWidth="2.2" /></Svg>
          </TitleRow>
          <MenuRow>
            {['Arquivo', 'Editar', 'Ver', 'Inserir', 'Formatar', 'Dados', 'Ferramentas', 'Extensões', 'Ajuda'].map(m => <span key={m}>{m}</span>)}
            <u>A última edição foi feita há 21 minutos</u>
          </MenuRow>
        </DocsMain>
        <HeaderRight>
          <Svg s={11}><path d="M2 3h20v19l-4-4H2ZM6 8h12M6 11h12M6 14h12" stroke="#555a5f" strokeWidth="2" /></Svg>
          <MeetButton>
            <Svg s={12}><path d="M1 8 7 3v5Z" fill="#ea4335" /><path d="M7 3h9v5H7Z" fill="#fbbc04" /><path d="M1 8h6v8H1Z" fill="#2a7de1" /><path d="M1 16h6v5H1Z" fill="#1a5fc8" /><path d="M7 16h9v5H7ZM16 10l7-5v14l-7-5Z" fill="#00a94f" /><path d="M16 3h1v18h-1Z" fill="#00832d" /></Svg>
            <Caret />
          </MeetButton>
          <ShareButton><MdLock size={7} />Compartilhar</ShareButton>
          <Slot $w={36}><Avatar $s={16}>R</Avatar></Slot>
        </HeaderRight>
      </DocsHeader>
      <Body>
        <Left>
          <ToolBar>
            <Slot $w={16}><MdUndo size={10} /></Slot><Slot $w={14}><MdRedo size={10} /></Slot><Slot $w={14}><MdPrint size={10} /></Slot>
            <Slot $w={16}><MdFormatPaint size={9} /></Slot><Rule $w={4} /><Slot $w={24}>100%</Slot><Slot $w={8}><Caret /></Slot><Rule $w={3} />
            <Slot $w={17}>R$</Slot><Slot $w={12}>%</Slot><Slot $w={16}>.0←</Slot><Slot $w={14}>.00</Slot><Slot $w={18}>123<Caret /></Slot><Rule $w={8} />
            <Slot $w={42}>Padrão (Ari...</Slot><Slot $w={8}><Caret /></Slot><Rule $w={8} /><Slot $w={10}>9</Slot><Slot $w={12} /><Slot $w={8}><Caret /></Slot><Rule $w={4} />
            <Slot $w={16}><MdFormatBold size={11} /></Slot><Slot $w={14}><MdFormatItalic size={11} /></Slot><Slot $w={14}><MdStrikethroughS size={10} /></Slot>
            <Slot $w={14}><Svg s={8}><path d="M4 21 12 3l8 18M7 15h10" stroke="#505357" strokeWidth="3" /></Svg></Slot><Rule $w={5} />
            <Slot $w={16}><FillIcon><MdFormatColorFill size={9} /></FillIcon></Slot><Slot $w={16}><MdBorderAll size={10} /></Slot>
            <Slot $w={15}><Svg s={10}><path d="M9 3H2v18h7M15 3h7v18h-7M2 12h7M15 12h7" stroke="#b8bbbe" strokeWidth="2.4" /></Svg></Slot><Slot $w={8}><Caret /></Slot><Rule $w={5} />
            <Slot $w={11}><MdFormatAlignCenter size={10} /></Slot><Slot $w={8}><Caret /></Slot><Slot $w={14}><MdVerticalAlignBottom size={10} /></Slot><Slot $w={5}><Caret /></Slot>
            <Slot $w={15}><Svg s={9}><path d="M3 2v20M21 2v20M7 8h6a4 4 0 0 1 0 8h-3M12 12l-4 4 4 4" stroke="#505357" strokeWidth="2.4" /></Svg></Slot><Slot $w={4}><Caret /></Slot>
            <Slot $w={16}><Svg s={9}><path d="M1 4 8 20 14 5M3 10l9 1M10 21 22 9M22 9v5M22 9h-5" stroke="#505357" strokeWidth="2.4" /></Svg></Slot><Slot $w={4}><Caret /></Slot><Rule $w={7} />
            <Slot $w={14}><MdInsertLink size={11} color="#b5b8bb" /></Slot>
            <Slot $w={14.5}><Svg s={9}><path d="M2 2h20v20l-4-4H2ZM12 6v8M8 10h8" stroke="#505357" strokeWidth="2.2" /></Svg></Slot>
            <Slot $w={14.5}><Svg s={9}><path d="M2 2h20v20H2ZM7 18v-6M12 18V7M17 18v-4" stroke="#505357" strokeWidth="2.4" /></Svg></Slot>
            <Slot $w={15}><Svg s={9}><path d="M3 4h18l-7 9v8l-4-3v-5Z" stroke="#505357" strokeWidth="2.4" /></Svg></Slot><Slot $w={8}><Caret /></Slot>
            <Slot $w={14}><MdFunctions size={11} /></Slot><Slot $w={4}><Caret /></Slot>
            <Push /><MdKeyboardArrowUp size={11} />
          </ToolBar>
          <FormulaBar>
            <Slot $w={12}>U99</Slot><Slot $w={26} /><Slot $w={8}><Caret /></Slot><Rule $w={6} /><Slot $w={15}><em>fx</em></Slot><Rule $w={8} />
            <code><b>=</b>'Sup de Vol'!O27</code>
          </FormulaBar>
          <SheetRow>
            <Sheet>
              {' ABCDEFGHIJKLMNOPQRSTUV'.split('').map((l, i) => <Head key={l} $on={l === 'U'} style={{ gridArea: `1 / ${i + 1}` }}>{l.trim()}</Head>)}
              {rowH.slice(1).map((_, i) => <Head key={i} $on={i === 1} style={{ gridArea: `${i + 2} / 1` }}>{i < 36 ? 98 + i : ''}</Head>)}
              {rowH.slice(1).flatMap((_, r) => colW.slice(1).map((__, c) => (
                <Cell key={`${r}-${c}`} $align="center" style={{ gridArea: `${r + 2} / ${c + 2}` }} />
              )))}
              {items.map(({ at, t, bg, fg, f = '' }, i) => (
                <Cell key={i} $bg={bg} $fg={fg} $bold={f.includes('b')} $wide={f.includes('w')}
                  $align={f.includes('l') || f.includes('u') ? 'flex-start' : f.includes('r') ? 'flex-end' : 'center'}
                  $note={f.includes('n') ? RN : f.includes('k') ? '#111' : undefined}
                  style={{ gridArea: area(at) }}>
                  {f.includes('u') ? <Link>{t}</Link> : t}
                </Cell>
              ))}
              <Scrap style={{ gridArea: area('A98:D98') }}>Spread do XEEY* -  WTNUT<i /></Scrap>
              <Tax style={{ gridArea: area('A114:G117') }}>
                <TaxInner>
                  <TaxRow>
                    <Formula>(1 + <i>i</i>)<sup>n</sup><span>− 1</span></Formula>
                    <BlueArrow />
                    <TaxText $w={160}>De um periodo <b>menor</b> para um <b>MAIOR</b></TaxText>
                    <TaxHint>Ex: <b>mês</b> para <b>ano</b>; <b>bimestre</b> para <b>ano</b></TaxHint>
                  </TaxRow>
                  <TaxRow>
                    <Formula $gold>(1 + <i>i</i>)<Power><b>1</b><b>n</b></Power><span>− 1</span></Formula>
                    <BlueArrow />
                    <TaxText $w={160}>De um periodo <Marked><b>MAIOR</b> para um <b>menor</b></Marked></TaxText>
                    <TaxHint>Ex: <b>ano</b> para <b>mês</b>; <b>ano</b> para <b>dia</b></TaxHint>
                  </TaxRow>
                </TaxInner>
              </Tax>
              <Frp style={{ gridArea: area('A124:F133') }}>
                <FrpTitle>F<sub>t</sub> = (PTAX<sub>t</sub> x 1.000) + f</FrpTitle>
                <FrpLine>F<sub>t</sub> = preço do contrato futuro</FrpLine>
                <FrpLine $full>PTAX<sub>t</sub> = cotação da PTAX, divulgada pelo BC para data T (D+0, caso FR0;</FrpLine>
                <FrpLine>D+1, caso FR1).</FrpLine>
                <FrpLine>f = forward points, cotação negociada.</FrpLine>
              </Frp>
              <Selected style={{ gridArea: area('U99') }} />
            </Sheet>
            <VScroll><i /><Steppers>▲<br />▼</Steppers></VScroll>
          </SheetRow>
          <HScroll><i /><span>◂ &nbsp; ▸</span></HScroll>
          <Legal>As cotações não são provenientes de todos os mercados e talvez tenham até 20 minutos de atraso. Os dados são fornecidos "no estado em que se encontram" e somente para fins informativos, não para fins comerciais ou de consultoria. <a>Exoneração de responsabilidade</a></Legal>
          <SheetTabs>
            <Slot $w={21} /><Slot $w={14}><MdAdd size={9} /></Slot><Slot $w={16}><MdMenu size={9} /></Slot><Slot $w={8} />
            <SheetTab $w={50} $on>PAINEL<Caret /></SheetTab>
            {sheetTabs.map(([t, w]) => <SheetTab key={t} $w={w}>{t}{w > 46 && <Caret />}</SheetTab>)}
            <TabNav><MdArrowLeft size={11} color="#b5b8bb" /><MdArrowRight size={11} /></TabNav>
            <Explore><Svg s={9}><rect width="24" height="24" rx="3" fill="#188f4a" /><path d="M12 5v14M5 12h14" stroke="#fff" strokeWidth="4" /></Svg>Explorar</Explore>
          </SheetTabs>
        </Left>
        <SidePanel>
          <SideSlot $h={28}><Svg s={10}><rect x="1" y="1" width="22" height="22" fill="#2f7de0" /><path d="M19 1h4v18h-4Z" fill="#fbbc04" /><path d="M3 19h16v4H3Z" fill="#34a853" /><rect x="5" y="5" width="14" height="14" fill="#fff" /><path d="M9 9h3v7M14 9h3l-2 7" stroke="#2f7de0" strokeWidth="1.5" /></Svg></SideSlot>
          <SideSlot $h={28}><Svg s={10}><rect width="24" height="24" rx="3" fill="#fbbc04" /><circle cx="12" cy="10" r="5" fill="#fff" /><path d="M10 16h4v3h-4Z" fill="#fff" /></Svg></SideSlot>
          <SideSlot $h={29}><Svg s={10}><circle cx="11" cy="13" r="9" stroke="#2b7de9" strokeWidth="4" /><path d="m7 12 4 4L22 4" stroke="#1b5fc4" strokeWidth="4" /></Svg></SideSlot>
          <SideSlot $h={28}><MdPerson size={11} color="#1a5fc8" /></SideSlot>
          <SideSlot $h={26}><Svg s={10}><path d="M12 1a8 8 0 0 0-8 8h8Z" fill="#4285f4" /><path d="M12 1a8 8 0 0 1 8 8l-8 1Z" fill="#ea4335" /><path d="M20 9c0 5-4 6-6 13h-2V9Z" fill="#34a853" /><path d="M4 9c0 3 3 5 4 7l5-6Z" fill="#fbbc04" /><circle cx="12" cy="9" r="3" fill="#fff" /></Svg></SideSlot>
          <SideSlot $h={17}><Svg s={10}><path d="M0 1h24" stroke="#d8dadc" strokeWidth="2.4" /></Svg></SideSlot>
          <SideSlot $h={20}><MdAdd size={11} color="#555" /></SideSlot>
          <Push />
          <SideSlot $h={19}><MdKeyboardArrowRight size={11} color="#555" /></SideSlot>
        </SidePanel>
      </Body>
      <TaskBar>
        <Slot $w={24}><FaWindows size={11} color="#f2f5f7" /></Slot>
        <Slot $w={24}><Svg s={11}><circle cx="14" cy="9" r="7" stroke="#e8edf0" strokeWidth="2" /><path d="m9 14-8 8" stroke="#e8edf0" strokeWidth="2" /></Svg></Slot>
        <Slot $w={24}><Svg s={11}><circle cx="12" cy="12" r="10" stroke="#f2f5f7" strokeWidth="3" /></Svg></Slot>
        <Slot $w={25.5}><Svg s={12}><path d="M3 2v3h12V2M3 22v-3h12v3M3 9h12v6H3ZM20 2v7M20 13v9M18 11h4" stroke="#e8edf0" strokeWidth="2" /></Svg></Slot>
        {tasks.map(([icon, s], i) => <Task key={i} $open={!!s} $on={s === 'on'}>{icon}</Task>)}
        <Tray>
          <Svg s={14}><circle cx="12" cy="12" r="11.5" fill="#f39a27" /></Svg>
          <Slot $w={35}>25°C</Slot><Slot $w={45}>Ensolarado</Slot>
          <Slot $w={8} /><Svg><rect y="2" width="24" height="20" fill="#0c1d05" /><path d="M5 12c4-6 10-6 14 0-4 6-10 6-14 0ZM12 12h6" stroke="#79b51c" strokeWidth="2.5" /></Svg>
          <Slot $w={21}><Svg s={12}><rect x="2" y="1" width="10" height="10" fill="#3a8bd0" /><rect x="11" y="5" width="9" height="14" fill="#d9582e" /><rect x="2" y="12" width="9" height="11" fill="#d8b33a" /></Svg></Slot>
          <Svg><circle cx="12" cy="12" r="11" fill="#fff" /><circle cx="12" cy="12" r="7" stroke="#d43c34" strokeWidth="4" /></Svg>
          <Slot $w={21}><MdMic size={12} /></Slot>
          <Svg s={11}><path d="M2 8h6l8-7v22l-8-7H2Z" fill="#d8523a" /><path d="M19 6v12" stroke="#9a4a33" strokeWidth="2" /></Svg>
          <Slot $w={22}><Svg><path d="m12 1 10 4c0 9-3 14-10 18C5 19 2 14 2 5Z" fill="#e9eef0" /><circle cx="17" cy="16" r="6" fill="#1f9c50" /></Svg></Slot>
          <Svg><path d="M8 2h8v6H8ZM5 8h14v14H5ZM10 13v4" stroke="#dfe5e8" strokeWidth="2" /></Svg>
          <Slot $w={21}><Svg><path d="M5 4h18v12H5ZM1 9v12h8M14 16v5M10 21h8" stroke="#dfe5e8" strokeWidth="2" /></Svg></Slot>
          <Svg><path d="M2 9h4l5-5v16l-5-5H2ZM14 8c2 3 2 5 0 8M17 5c4 5 4 9 0 14M20 3c5 6 5 12 0 18" stroke="#dfe5e8" strokeWidth="1.8" /></Svg>
          <Slot $w={31}>13:00</Slot>
          <Slot $w={20}><Svg s={12}><path d="M2 3h20v15h-7l-4 4v-4H2Z" stroke="#dfe5e8" strokeWidth="2" /></Svg></Slot>
          <Slot $w={12} />
        </Tray>
      </TaskBar>
      <Pointer width="10" height="14" viewBox="0 0 10 14"><path d="M1 0v11l2.5-2.3 1.8 4 1.8-.8L5.3 8H9Z" fill="#fff" stroke="#444" strokeWidth=".8" /></Pointer>
    </Page>
  );
}
